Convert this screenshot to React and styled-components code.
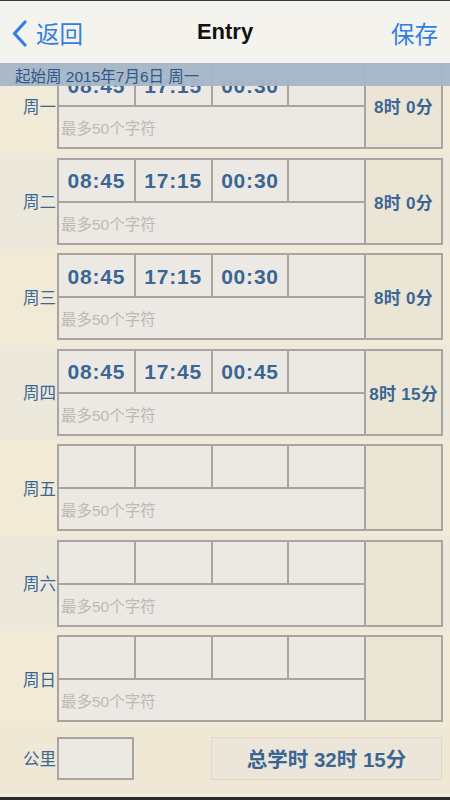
import React from "react";
import styled, { createGlobalStyle } from "styled-components";

const GlobalStyle = createGlobalStyle`
    html, body {
        margin: 0;
        padding: 0;
        background: #2b2b2b;
    }
    * {
        box-sizing: border-box;
    }
`;

const FONT = `"Liberation Sans", "Noto Sans CJK SC", sans-serif`;
const BLUE = "#2f80e2";
const TEXT_BLUE = "#3a6694";
const LINE = "#a9a4a0";

const Screen = styled.div`
    width: 450px;
    height: 800px;
    display: flex;
    flex-direction: column;
    font-family: ${FONT};
    background: #efe9d7;
    border-top: 1px solid #3a3a3a;
    border-bottom: 3px solid #2e2c28;
    overflow: hidden;
`;

const NavBar = styled.header`
    height: 62px;
    flex: 0 0 62px;
    display: flex;
    align-items: center;
    justify-content: space-between;
    padding: 0 12px 0 12px;
    background: #f5f3ee;
    position: relative;
    z-index: 2;
`;

const NavButton = styled.button`
    display: flex;
    align-items: center;
    gap: 9px;
    border: none;
    background: none;
    padding: 0;
    font-family: ${FONT};
    font-size: 23.5px;
    color: ${BLUE};
    margin-top: 2px;
`;

const Title = styled.h1`
    position: absolute;
    left: 0;
    right: 0;
    margin: 0;
    text-align: center;
    font-size: 22px;
    font-weight: bold;
    color: #111;
    pointer-events: none;
`;

const Content = styled.main`
    flex: 1;
    position: relative;
    overflow: hidden;
    display: flex;
    flex-direction: column;
`;

const WeekHeader = styled.div`
    position: absolute;
    top: 0;
    left: 0;
    right: 0;
    height: 23px;
    padding: 4px 0 0 15px;
    background: rgba(166, 183, 200, 0.97);
    color: #2d5887;
    font-size: 15.5px;
    line-height: 20px;
    z-index: 1;
`;

const DayList = styled.div`
    margin-top: -5px;
    display: flex;
    flex-direction: column;
`;

const DayRow = styled.div`
    height: 95.5px;
    display: flex;
    align-items: center;
    background: ${(p) => (p.$alt ? "#ece8dc" : "#f0ead7")};
`;

const DayLabel = styled.div`
    width: 57px;
    padding-right: 1px;
    text-align: right;
    font-size: 16.5px;
    color: ${TEXT_BLUE};
`;

const EntryGrid = styled.div`
    width: 386px;
    height: 87px;
    display: grid;
    grid-template-columns: repeat(5, 1fr);
    grid-template-rows: 41px 40px;
    gap: 2px;
    padding: 2px;
    background: ${LINE};
`;

const TimeCell = styled.div`
    background: #ece9e4;
    display: flex;
    align-items: center;
    justify-content: center;
    font-size: 21px;
    font-weight: bold;
    letter-spacing: 0.8px;
    color: ${TEXT_BLUE};
    padding-top: 2px;
    overflow: hidden;
`;

const NoteCell = styled.div`
    grid-column: 1 / 5;
    grid-row: 2;
    background: #ece9e4;
    display: flex;
    align-items: center;
    padding-left: 2px;
    font-size: 15.5px;
    color: #bdb9b3;
`;

const SumCell = styled.div`
    grid-column: 5;
    grid-row: 1 / 3;
    background: #ebe5d6;
    display: flex;
    align-items: center;
    justify-content: center;
    font-size: 17px;
    font-weight: bold;
    letter-spacing: 0.3px;
    color: ${TEXT_BLUE};
`;

const Footer = styled.div`
    flex: 1;
    display: flex;
    align-items: center;
    padding-bottom: 4px;
    background: #eee8d5;
    border-bottom: 3px solid #f3eee0;
`;

const MileBox = styled.div`
    width: 77px;
    height: 43px;
    border: 2px solid ${LINE};
    background: #ece9e4;
`;

const TotalBox = styled.div`
    margin-left: 77px;
    width: 231px;
    height: 43px;
    border: 1px solid #dcd7ca;
    background: #ebe6d9;
    display: flex;
    align-items: center;
    justify-content: center;
    font-size: 20.5px;
    font-weight: bold;
    color: ${TEXT_BLUE};
`;

const days = [
    { name: "周一", times: ["08:45", "17:15", "00:30", ""], sum: "8时 0分" },
    { name: "周二", times: ["08:45", "17:15", "00:30", ""], sum: "8时 0分" },
    { name: "周三", times: ["08:45", "17:15", "00:30", ""], sum: "8时 0分" },
    { name: "周四", times: ["08:45", "17:45", "00:45", ""], sum: "8时 15分" },
    { name: "周五", times: ["", "", "", ""], sum: "" },
    { name: "周六", times: ["", "", "", ""], sum: "" },
    { name: "周日", times: ["", "", "", ""], sum: "" },
];

const BackChevron = () => (
    <svg width="15" height="27" viewBox="0 0 15 27">
        <path d="M13 2 L2.5 13.5 L13 25" fill="none" stroke={BLUE} strokeWidth="3.2" strokeLinecap="round" strokeLinejoin="round" />
    </svg>
);

const App = () => {
    return (
        <>
            <GlobalStyle />
            <Screen>
                <NavBar>
                    <NavButton>
                        <BackChevron />
                        返回
                    </NavButton>
                    <Title>Entry</Title>
                    <NavButton>保存</NavButton>
                </NavBar>
                <Content>
                    <WeekHeader>起始周 2015年7月6日 周一</WeekHeader>
                    <DayList>
                        {days.map((day, i) => (
                            <DayRow key={day.name} $alt={i % 2 === 1}>
                                <DayLabel>{day.name}</DayLabel>
                                <EntryGrid>
                                    {day.times.map((t, j) => (
                                        <TimeCell key={j}>{t}</TimeCell>
                                    ))}
                                    <NoteCell>最多50个字符</NoteCell>
                                    <SumCell>{day.sum}</SumCell>
                                </EntryGrid>
                            </DayRow>
                        ))}
                    </DayList>
                    <Footer>
                        <DayLabel>公里</DayLabel>
                        <MileBox />
                        <TotalBox>总学时 32时 15分</TotalBox>
                    </Footer>
                </Content>
            </Screen>
        </>
    );
};

export default App;
